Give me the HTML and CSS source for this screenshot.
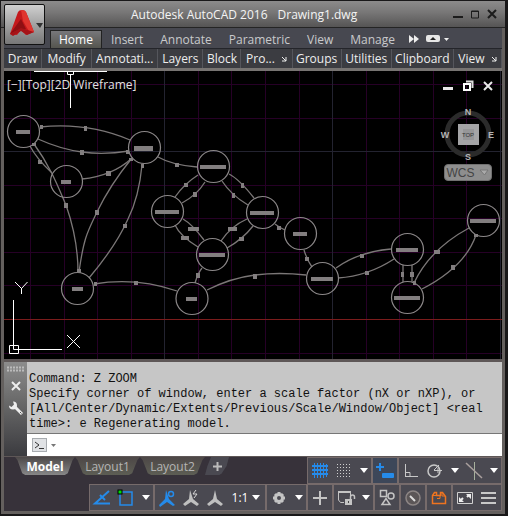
FILE: index.html
```html
<!DOCTYPE html>
<html lang="en">
<head>
<meta charset="utf-8">
<title>Autodesk AutoCAD 2016</title>
<link rel="stylesheet" href="styles.css">
</head>
<body>
<div class="window">
  <header class="titlebar">
    <button class="app-button" aria-label="Application menu">
      <svg width="38" height="38" viewBox="0 0 38 38">
        <path d="M4 28 12 6q1-2 4-2t4 2l8 20-8 3-5-5-4 5z" fill="#c4191c"/>
        <path d="M4 28 15 13l5 10-8 1z" fill="#8f0f13"/>
        <path d="M15 4q4 0 5 2l8 20-4 1-7-12z" fill="#e0352f"/>
        <path d="M4 28l11-6 13 4-7 3-6-4-8 5z" fill="#a51418"/>
        <path d="M30 17h7l-3 5z" fill="#333"/>
      </svg>
    </button>
    <h1 class="title"><span>Autodesk AutoCAD 2016</span><span>Drawing1.dwg</span></h1>
    <div class="window-controls">
      <button aria-label="Minimize"><svg width="12" height="12" viewBox="0 0 12 12"><path d="M1 9h10" stroke="#1c1c1c" stroke-width="2"/></svg></button>
      <button aria-label="Maximize"><svg width="12" height="12" viewBox="0 0 12 12"><path d="M2.500 3h7v7h-7zM2 3.500h8" fill="none" stroke="#1c1c1c"/></svg></button>
      <button aria-label="Close"><svg width="12" height="12" viewBox="0 0 12 12"><path d="M2 2l8 8M10 2l-8 8" stroke="#1c1c1c" stroke-width="2"/></svg></button>
    </div>
  </header>

  <div class="frame">
    <nav class="ribbon-tabs">
      <button class="tab tab-active">Home</button>
      <button class="tab">Insert</button>
      <button class="tab">Annotate</button>
      <button class="tab">Parametric</button>
      <button class="tab">View</button>
      <button class="tab">Manage</button>
      <button class="tab-more" aria-label="More tabs"><svg width="12" height="10" viewBox="0 0 12 10"><path d="M1 1l5 4-5 4zM6 1l5 4-5 4z" fill="#eee"/></svg></button>
      <button class="tab-more" aria-label="Ribbon display"><svg width="26" height="10" viewBox="0 0 26 10"><rect x="1" y="1" width="14" height="7" rx="2" fill="#e6e6e6"/><path d="M5 6l3-3 3 3z" fill="#222"/><path d="M19 4h5l-2.500 3z" fill="#eee"/></svg></button>
    </nav>
    <div class="panels">
      <button>Draw</button>
      <button>Modify</button>
      <button>Annotati...</button>
      <button>Layers</button>
      <button>Block</button>
      <button>Pro...<svg width="6" height="6" viewBox="0 0 6 6"><path d="M1 1l4 4M5 1v4H1" fill="none" stroke="#eee"/></svg></button>
      <button>Groups</button>
      <button>Utilities</button>
      <button>Clipboard</button>
      <button>View<svg width="6" height="6" viewBox="0 0 6 6"><path d="M1 1l4 4M5 1v4H1" fill="none" stroke="#eee"/></svg></button>
    </div>

    <main class="viewport">
      <svg class="drawing" viewBox="4 71 498 288" role="img" aria-label="Drawing">
        <g class="grid-minor">
          <path d="M30.500 71v288M64.500 71v288M97.500 71v288M131.500 71v288M198.500 71v288M231.500 71v288M265.500 71v288M299.500 71v288M366.500 71v288M399.500 71v288M433.500 71v288M466.500 71v288"/>
          <path d="M4 84.500h498M4 118.500h498M4 185.500h498M4 218.500h498M4 252.500h498M4 285.500h498M4 353.500h498"/>
        </g>
        <path class="grid-major" d="M164.500 71v288M332.500 71v288M500.500 71v288M4 151.500h498"/>
        <path class="axis" d="M4 319.500h498"/>
        <g class="edges">
          <path d="M40 127Q88 122 130 140"/>
          <path d="M38 139Q60 149 82 152T129 151"/>
          <path d="M30 146Q36 158 52 173"/>
          <path d="M34 144C50 166 57 184 66 205C73 225 78 245 78 272"/>
          <path d="M82 179Q112 176 131 159"/>
          <path d="M132 158Q110 185 97 212C88 231 84 236 79 272"/>
          <path d="M142 165Q139 197 128 219Q116 246 89 278"/>
          <path d="M158 157Q172 165 197 167"/>
          <path d="M198 175Q184 184 175 197"/>
          <path d="M205 182Q197 195 182 203"/>
          <path d="M229 174Q239 179 254 198"/>
          <path d="M222 181Q231 195 248 205"/>
          <path d="M175 225Q180 236 198 247"/>
          <path d="M183 219Q192 224 204 240"/>
          <path d="M247 219Q231 226 221 241"/>
          <path d="M253 226Q243 239 227 248"/>
          <path d="M202 268Q198 273 195 283"/>
          <path d="M275 224Q280 228 285 230"/>
          <path d="M304 250Q307 260 312 267"/>
          <path d="M207 290Q231 278 255 275T306 275"/>
          <path d="M94 284Q136 277 177 291"/>
          <path d="M336 268Q358 252 391 249"/>
          <path d="M338 278Q368 276 394 259"/>
          <path d="M403 265v17M412 265v17"/>
          <path d="M414 283Q430 249 469 228"/>
          <path d="M422 289Q465 267 476 235"/>
        </g>
        <g class="nodes">
          <circle cx="23.500" cy="131.500" r="16"/><circle cx="66.500" cy="181.500" r="16"/>
          <circle cx="144.500" cy="147.500" r="16"/><circle cx="213.500" cy="166.500" r="16"/>
          <circle cx="167.500" cy="211.500" r="16"/><circle cx="262.500" cy="212.500" r="16"/>
          <circle cx="212.500" cy="254.500" r="16"/><circle cx="300.500" cy="233.500" r="16"/>
          <circle cx="322.500" cy="278.500" r="16"/><circle cx="77.500" cy="288.500" r="16"/>
          <circle cx="192" cy="298.500" r="16"/><circle cx="407.500" cy="249.500" r="16"/>
          <circle cx="407.500" cy="297.500" r="16"/><circle cx="483.500" cy="220.500" r="16"/>
        </g>
        <g class="marks">
          <path d="M16 130h14v4H16zM61 180h10v4H61zM134 146h19v5h-19zM200 165h26v4h-26zM155 210h24v4h-24zM250 211h24v4h-24zM199 253h26v4h-26zM293 232h14v4h-14zM311 277h22v4h-22zM72 287h11v4H72zM186 297h11v4h-11zM396 248h22v4h-22zM394 296h26v4h-26zM470 219h26v4h-26z"/>
          <path d="M84 126h3v5h-3zM80 150h4v5h-4zM38 160h4v4h-4zM64 203h4v5h-4zM106 171h5v5h-5zM95 210h4v5h-4zM123 224h4v4h-4zM175 163h4v4h-4zM184 183h4v4h-4zM193 192h4v5h-4zM241 183h3v5h-3zM232 193h3v5h-3zM181 236h8v4h-8zM188 227h11v4h-11zM228 227h9v4h-9zM239 237h5v4h-5zM196 273h4v5h-4zM277 226h4v4h-4zM305 257h4v4h-4zM253 274h4v5h-4zM134 281h4v4h-4zM360 254h4v4h-4zM365 271h4v4h-4zM401 272h3v5h-3zM410 272h4v5h-4zM434 250h6v4h-6zM451 265h4v5h-4z"/>
          <path d="M40 125h3v4h-3zM126 150h3v4h-3zM129 158h4v3h-4zM141 164h3v4h-3zM77 269h4v4h-4zM32 143h4v3h-4zM94 282h3v4h-3zM413 281h3v4h-3zM474 234h4v3h-4z"/>
        </g>
        <g class="ucs">
          <path d="M13.500 300v49.500H62M9.500 345.500h9v8h-9zM15 282l6.500 6.500 6-6.500M21.500 288v6M67 335l13 13M80 335l-13 13"/>
          <path d="M34 71.500h73M67.500 71v3.500h6V71M70.500 75v33"/>
        </g>
      </svg>
      <button class="view-label">[−][Top][2D Wireframe]</button>
      <div class="view-tools">
        <div class="view-controls">
          <button aria-label="Minimize drawing"><svg width="12" height="12" viewBox="0 0 12 12"><path d="M1 7h10v3H1z" fill="#e8e8e8"/></svg></button>
          <button aria-label="Restore drawing"><svg width="12" height="12" viewBox="0 0 12 12"><path d="M4 1.500h6.500V8" fill="none" stroke="#ddd" stroke-width="2"/><path d="M2 4h6v6H2z" fill="none" stroke="#fff" stroke-width="2"/></svg></button>
          <button aria-label="Close drawing"><svg width="12" height="12" viewBox="0 0 12 12"><path d="M2 2l8 8M10 2l-8 8" stroke="#e8e8e8" stroke-width="2"/></svg></button>
        </div>
        <svg class="compass" width="56" height="56" viewBox="0 0 56 56" role="img" aria-label="View cube">
          <circle cx="28" cy="28" r="21" fill="none" stroke="#2b2b2b" stroke-width="5"/>
          <rect x="18" y="18" width="21" height="21" fill="#a4a4a6"/>
          <rect x="23" y="23" width="11" height="11" fill="#969698"/>
          <text x="28" y="31" class="cube-face">TOP</text>
          <g class="cube-dir"><text x="28" y="9">N</text><text x="28" y="54">S</text><text x="5" y="32">W</text><text x="51" y="32">E</text></g>
        </svg>
        <button class="wcs">WCS<svg width="11" height="8" viewBox="0 0 11 8"><path d="M1 1h8L5.500 6z" fill="#aaa" stroke="#777"/></svg></button>
      </div>
    </main>

    <section class="command">
      <div class="command-handle">
        <svg width="18" height="6" viewBox="0 0 18 6"><path d="M0 1.500h18M0 4.500h18" stroke="#bbb" stroke-width="2" stroke-dasharray="2 1"/></svg>
        <button aria-label="Close command line"><svg width="12" height="12" viewBox="0 0 12 12"><path d="M2 2l8 8M10 2l-8 8" stroke="#eee" stroke-width="2"/></svg></button>
        <button aria-label="Customize"><svg width="16" height="16" viewBox="0 0 16 16"><path d="M6 6l8 8" stroke="#eee" stroke-width="3"/><path d="M5 1.500a4 4 0 1 1-4 4l2.500 1.500 2.500-2.500z" fill="#eee"/><path d="M12 12l1.500 1.500" stroke="#555"/></svg></button>
      </div>
      <div class="command-body">
        <pre class="history">Command: Z ZOOM
Specify corner of window, enter a scale factor (nX or nXP), or
[All/Center/Dynamic/Extents/Previous/Scale/Window/Object] &lt;real
time&gt;: e Regenerating model.</pre>
        <div class="prompt">
          <button aria-label="Recent commands"><svg width="24" height="14" viewBox="0 0 24 14"><rect x=".5" y=".5" width="14" height="13" fill="#e0e2e5" stroke="#a8acb0"/><path d="M3 4l4 3-4 3" fill="none" stroke="#333"/><path d="M7 10.500h5" stroke="#333"/><path d="M19 6h5l-2.500 3z" fill="#777"/></svg></button>
          <input type="text" aria-label="Command">
        </div>
      </div>
    </section>

    <footer class="bottom">
      <div class="bottom-row">
        <nav class="layouts">
          <button class="layout layout-active">Model</button>
          <button class="layout">Layout1</button>
          <button class="layout">Layout2</button>
          <button class="layout layout-add" aria-label="New layout"><svg width="9" height="9" viewBox="0 0 9 9"><path d="M0 4.500h9M4.500 0v9" stroke="#bbb" stroke-width="2"/></svg></button>
        </nav>
        <div class="status">
          <div class="group">
            <button class="cell" aria-label="Grid"><svg width="20" height="20" viewBox="0 0 20 20"><path d="M4.500 2v15M7.500 2v15M10.500 2v15M13.500 2v15M16.500 3v13" stroke="#258bea"/><path d="M2 5h16M2 9h16M2 13h16" stroke="#258bea" stroke-width="2" stroke-dasharray="2 1"/></svg></button>
            <button class="cell" aria-label="Snap"><svg width="20" height="20" viewBox="0 0 20 20"><path d="M3 3.500h14M3 6.500h14M3 9.500h14M3 12.500h14M3 15.500h14" stroke="#d0d0d0" stroke-dasharray="1 2"/></svg></button>
            <button class="cell cell-drop" aria-label="Snap options"><svg width="8" height="5" viewBox="0 0 8 5"><path d="M0 0h8L4 5z" fill="#fff"/></svg></button>
          </div>
          <div class="group">
            <button class="cell cell-on" aria-label="Dynamic input"><svg width="20" height="20" viewBox="0 0 20 20"><path d="M1 6h8M5 2v8" stroke="#258bea" stroke-width="2"/><rect x="7" y="12" width="12" height="5" rx="1" fill="#258bea"/></svg></button>
          </div>
          <div class="group">
            <button class="cell" aria-label="Ortho"><svg width="20" height="20" viewBox="0 0 20 20"><path d="M4.500 3v13M4 15.500h13M5 11.500h4V16" fill="none" stroke="#c8c8c8"/></svg></button>
            <button class="cell" aria-label="Polar tracking"><svg width="20" height="20" viewBox="0 0 20 20"><circle cx="9" cy="10" r="6" fill="none" stroke="#c8c8c8" stroke-width="1.500"/><path d="M9 9.500h8M9 9l5-5M13 7v5" fill="none" stroke="#c8c8c8"/></svg></button>
            <button class="cell cell-drop" aria-label="Polar options"><svg width="8" height="5" viewBox="0 0 8 5"><path d="M0 0h8L4 5z" fill="#fff"/></svg></button>
            <button class="cell" aria-label="Isodraft"><svg width="20" height="20" viewBox="0 0 20 20"><path d="M10.500 1v18" stroke="#a6b09c"/><path d="M2 2l16 15" stroke="#aaa09e" stroke-width="1.500"/></svg></button>
            <button class="cell cell-drop" aria-label="Isodraft options"><svg width="8" height="5" viewBox="0 0 8 5"><path d="M0 0h8L4 5z" fill="#fff"/></svg></button>
          </div>
        </div>
      </div>
      <div class="status">
        <div class="group">
          <button class="cell" aria-label="Object snap tracking"><svg width="20" height="20" viewBox="0 0 20 20"><path d="M17 3L3 15.500h15" fill="none" stroke="#258bea" stroke-width="2"/><path d="M8 7l5 5" stroke="#258bea" stroke-width="2"/></svg></button>
          <button class="cell" aria-label="Object snap"><svg width="20" height="20" viewBox="0 0 20 20"><path d="M4 4h12v13H4z" fill="none" stroke="#258bea" stroke-width="1.500"/><rect x="2" y="2" width="4" height="4" fill="#0d0" stroke="#000"/></svg></button>
          <button class="cell cell-drop" aria-label="Object snap options"><svg width="8" height="5" viewBox="0 0 8 5"><path d="M0 0h8L4 5z" fill="#fff"/></svg></button>
        </div>
        <div class="group">
          <button class="cell" aria-label="Annotation visibility"><svg width="20" height="20" viewBox="0 0 20 20"><path d="M9 2l3 9 6 6-2 1-6-4-7 5-1-2 6-6z" fill="#258bea"/><circle cx="14" cy="6" r="2.500" fill="#4a4951" stroke="#258bea" stroke-width="1.500"/></svg></button>
          <button class="cell" aria-label="Auto scale"><svg width="20" height="20" viewBox="0 0 20 20"><path d="M9 2l3 9 6 5-2 2-6-4-6 4-2-2 6-5z" fill="#bfbfbf"/><path d="M15 2l-3 4h4l-3 4" fill="none" stroke="#d8d8d8"/></svg></button>
          <button class="cell" aria-label="Annotation scale"><svg width="20" height="20" viewBox="0 0 20 20"><path d="M10 2l2 9 6 5-2 2-6-4-6 4-2-2 6-5z" fill="#bfbfbf"/></svg></button>
          <button class="cell cell-scale">1:1<svg width="8" height="5" viewBox="0 0 8 5"><path d="M0 0h8L4 5z" fill="#fff"/></svg></button>
        </div>
        <div class="group">
          <button class="cell" aria-label="Workspace"><svg width="20" height="20" viewBox="0 0 20 20"><path d="M10 4v12M4 10h12M6 6l8 8M14 6l-8 8" stroke="#c4c4c4" stroke-width="3"/><circle cx="10" cy="10" r="3.500" fill="#4a4951" stroke="#c4c4c4" stroke-width="3"/></svg></button>
          <button class="cell cell-drop" aria-label="Workspace options"><svg width="8" height="5" viewBox="0 0 8 5"><path d="M0 0h8L4 5z" fill="#fff"/></svg></button>
        </div>
        <div class="group">
          <button class="cell" aria-label="Annotation monitor"><svg width="20" height="20" viewBox="0 0 20 20"><path d="M3 10h14M10 3v14" stroke="#c4c4c4" stroke-width="2"/></svg></button>
        </div>
        <div class="group">
          <button class="cell" aria-label="Lock interface"><svg width="20" height="20" viewBox="0 0 20 20"><path d="M8 14.500H4.500L2.500 12V3.500h12V8" fill="none" stroke="#c4c4c4"/><path d="M2 4h13" stroke="#c4c4c4" stroke-width="2"/><rect x="9" y="11" width="7" height="6" fill="#c4c4c4"/><path d="M14.500 11V9q0-2 2-2t2 2v2" fill="none" stroke="#c4c4c4" stroke-width="1.500"/><path d="M12.500 13v2" stroke="#444"/></svg></button>
          <button class="cell cell-drop" aria-label="Lock options"><svg width="8" height="5" viewBox="0 0 8 5"><path d="M0 0h8L4 5z" fill="#fff"/></svg></button>
        </div>
        <div class="group">
          <button class="cell" aria-label="Isolate objects"><svg width="20" height="20" viewBox="0 0 20 20"><path d="M3.500 2.500h6v6h-6zM5 16.500l4-6 4 6z" fill="none" stroke="#c4c4c4" stroke-width="1.500"/><circle cx="14" cy="8" r="3" fill="none" stroke="#c4c4c4" stroke-width="1.500"/></svg></button>
        </div>
        <div class="group">
          <button class="cell" aria-label="Hardware acceleration"><svg width="20" height="20" viewBox="0 0 20 20"><circle cx="10" cy="10" r="7" fill="#5b5657" stroke="#8d8685" stroke-width="1.500"/><path d="M7 8l5 5" stroke="#ddd" stroke-width="2"/></svg></button>
        </div>
        <div class="group">
          <button class="cell" aria-label="Notifications"><svg width="20" height="20" viewBox="0 0 20 20"><path d="M3.500 15.500v-8l2-3h2v3h4v-3h2l3 4v7z" fill="none" stroke="#ee7420" stroke-width="1.500"/><path d="M3 7.500h8v3H8M13 4v4h3" fill="none" stroke="#ee7420"/></svg></button>
        </div>
        <div class="group">
          <button class="cell" aria-label="Clean screen"><svg width="20" height="20" viewBox="0 0 20 20"><path d="M2.500 4.500h15v11h-15z" fill="none" stroke="#d0d0d0"/><path d="M11 6h5v5zM4 9v5h5z" fill="#eee"/><path d="M12 9l2-2M6 12l2-2" stroke="#eee" stroke-width="2"/></svg></button>
          <button class="cell" aria-label="Customization"><svg width="20" height="20" viewBox="0 0 20 20"><path d="M2 5h15M2 10h15M2 15h15" stroke="#c8c8c8" stroke-width="2"/></svg></button>
        </div>
      </div>
    </footer>
  </div>
</div>
</body>
</html>
```
FILE: styles.css
```css
* { box-sizing: border-box; }

body {
  margin: 0;
  background: #191819;
  font-family: "Open Sans", "Noto Sans", sans-serif;
  font-size: 12px;
  color: #eee;
}

button {
  display: flex;
  align-items: center;
  justify-content: center;
  margin: 0;
  padding: 0;
  border: 0;
  background: none;
  color: inherit;
  font: inherit;
  white-space: nowrap;
}

svg { display: block; flex: none; }

.window {
  position: relative;
  margin: 0 3px 2px 1px;
  padding-top: 1px;
}

/* Title bar */
.titlebar {
  display: flex;
  align-items: center;
  height: 27px;
  background: linear-gradient(#8c8b8b, #777676 45%, #555454);
  border-bottom: 1px solid #242424;
}

.title {
  display: flex;
  flex: 1;
  gap: 10px;
  margin: 0;
  padding-left: 130px;
  font-size: 12px;
  font-weight: 400;
  color: #f4f4f4;
  white-space: nowrap;
}

.window-controls {
  display: flex;
  gap: 5px;
  padding-right: 7px;
}

.app-button {
  position: absolute;
  top: 4px;
  left: 3px;
  z-index: 1;
  width: 41px;
  height: 41px;
  border: 1px solid #111;
  border-radius: 2px;
  background: linear-gradient(#d0d0d0, #a2a2a2 50%, #777);
}

.frame {
  border: 3px solid #64605e;
  border-top: 0;
}

/* Ribbon */
.ribbon-tabs {
  display: flex;
  align-items: flex-end;
  height: 20px;
  padding-left: 46px;
  background: #474850;
  color: #c9cacc;
}

.tab {
  height: 18px;
  padding: 0 8px;
}

.tab + .tab { margin-left: 1px; }

.tab-active {
  border: 1px solid #222;
  border-bottom: 0;
  background: linear-gradient(#77777a, #55554f);
  color: #fff;
}

.tab-more {
  height: 18px;
  margin-left: 5px;
}

.panels {
  display: grid;
  grid-template-columns: 38fr 50fr 66fr 45fr 38fr 51fr 49fr 50fr 62fr 48fr;
  height: 23px;
  border-top: 1px solid #24252a;
  border-bottom: 3px solid #777472;
  background: #3b3c41;
}

.panels button {
  min-width: 0;
  gap: 6px;
  border-right: 1px solid #55565c;
}

/* Drawing area */
.viewport {
  position: relative;
  background: #000;
}

.drawing { width: 100%; height: auto; }

.grid-minor { fill: none; stroke: #260026; }
.grid-major { fill: none; stroke: #232330; }
.axis { stroke: #7b1c1c; }
.edges, .nodes { fill: none; }
.edges { stroke: #7b7777; stroke-width: 1.3; }
.nodes { stroke: #8c8889; stroke-width: 1.2; }
.marks { fill: #827e7f; }
.ucs { fill: none; stroke: #fff; }

.view-label {
  position: absolute;
  top: 5px;
  left: 3px;
  color: #e2e2e2;
}

.view-tools {
  position: absolute;
  top: 9px;
  right: 6px;
  display: flex;
  flex-direction: column;
  align-items: center;
}

.view-controls {
  display: flex;
  gap: 8px;
}

.compass {
  margin-top: 14px;
}

.cube-face {
  fill: #333;
  font: 6px "Liberation Sans", sans-serif;
  text-anchor: middle;
}

.cube-dir {
  fill: #b4b4b4;
  font: bold 9px "Liberation Sans", sans-serif;
  text-anchor: middle;
}

.wcs {
  gap: 4px;
  width: 48px;
  height: 17px;
  margin-top: 2px;
  border: 1px solid #707070;
  border-radius: 4px;
  background: #8e8e8e;
  color: #444;
  font-family: "Liberation Sans", sans-serif;
}

/* Command line */
.command {
  display: flex;
  border-top: 3px solid #5e5757;
  border-bottom: 1px solid #5e5757;
}

.command-handle {
  display: flex;
  flex-direction: column;
  align-items: center;
  gap: 8px;
  width: 23px;
  padding-top: 4px;
  background: linear-gradient(#8c8c8c, #6b6b6b 40%, #3b3b3f);
}

.command-body {
  flex: 1;
  min-width: 0;
}

.history {
  margin: 0;
  padding: 10px 2px 1px;
  background: #c6c6c6;
  color: #111;
  font: 12px/15px "Liberation Mono", monospace;
}

.prompt {
  display: flex;
  align-items: center;
  height: 23px;
  padding-left: 5px;
  border-top: 1px solid #777;
  background: #fff;
}

.prompt input {
  flex: 1;
  min-width: 0;
  height: 20px;
  border: 0;
  outline: 0;
  background: transparent;
  font: 12px "Liberation Mono", monospace;
}

/* Layout tabs and status bar */
.bottom { background: #37323a; }

.bottom-row {
  display: flex;
  justify-content: space-between;
  align-items: flex-start;
}

.layouts {
  display: flex;
  padding-left: 11px;
  color: #b5b5b5;
}

.layout {
  width: 65px;
  height: 18px;
  background: linear-gradient(#4d4747, #5d5e54);
  clip-path: polygon(0 0, 100% 0, 96% 16%, 88% 90%, 83% 100%, 17% 100%, 12% 90%, 4% 16%);
}

.layout-active {
  width: 60px;
  background: linear-gradient(#4c4848, #878787);
  color: #fff;
  font-weight: 700;
}

.layout-add {
  width: 24px;
  background: #4a4951;
  clip-path: polygon(25% 0, 100% 0, 90% 50%, 70% 90%, 60% 100%, 0 100%, 10% 50%);
}

.status {
  display: flex;
  justify-content: flex-end;
}

.group {
  display: flex;
  height: 27px;
  border: 1px solid #766b6b;
  background: #4a4951;
}

.cell { width: 24px; }
.cell-drop { width: 15px; }
.cell-on { background: #3d4759; }

.cell-scale {
  gap: 4px;
  width: 38px;
  color: #fff;
}
```
